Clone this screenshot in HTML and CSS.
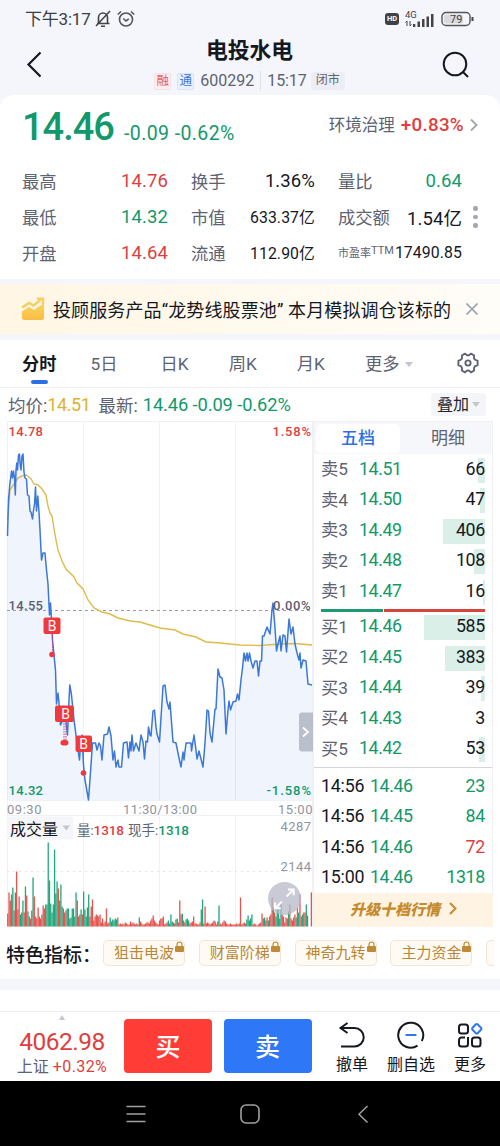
FILE: index.html
```html
<!DOCTYPE html>
<html lang="zh-CN">
	<head>
		<meta charset="utf-8" />
		<title>电投水电 600292</title>
		<link rel="stylesheet" href="styles.css">
	</head>
	<body>
		<div class="status-bar">
			<span class="clock">下午3:17</span>
			<svg class="bell" width="18" height="20" viewBox="0 0 18 20" fill="none" stroke="#444" stroke-width="1.6">
				<path d="M3 14.5h12.5M4.5 14V8.500a4.500 4.500 0 0 1 9 0V14M7 17.200h4M2 17L16 2" />
			</svg>
			<svg class="alarm" width="18" height="18" viewBox="0 0 18 18" fill="none" stroke="#555" stroke-width="1.6">
				<circle cx="9" cy="9.500" r="6.500" />
				<path d="M6.300 8.500L9 11l2.800-2.200M.800 4.500L4 1.500M17.200 4.500L14 1.500" />
			</svg>
			<div class="status-right">
				<span class="hd">HD</span>
				<svg width="30" height="18" viewBox="0 0 30 18" fill="#444">
					<text x="0" y="8" font-size="9.500" font-family="Roboto">4G</text>
					<path d="M2 11v5M.500 12.500L2 11M5 16v-5M5 16l1.500-1.500" stroke="#444" fill="none" />
					<path d="M8 14h2.300v3H8zM12.500 11.500h2.500v5.500h-2.500zM17 9h2.500v8H17zM21.500 6.500H24V17h-2.500zM26 4h2.500v13H26z" />
				</svg>
				<svg width="33" height="16" viewBox="0 0 33 16">
					<rect x="1" y="1.500" width="28" height="13" rx="4" fill="none" stroke="#555" stroke-width="1.400" />
					<rect x="3" y="3.500" width="19" height="9" rx="2" fill="#d9dadd" />
					<path d="M31.500 6v4" stroke="#444" stroke-width="2" />
					<text x="9" y="12" font-size="11" font-family="Roboto" fill="#444">79</text>
				</svg>
			</div>
		</div>

		<header class="header">
			<svg class="back" width="18" height="28" viewBox="0 0 18 28" fill="none" stroke="#15181f" stroke-width="2.200">
				<path d="M14.500 2.500L2.500 14.500L14.500 26.500" />
			</svg>
			<div class="title-box">
				<h1>电投水电</h1>
				<div class="sub-title">
					<span class="tag tag-red">融</span>
					<span class="tag tag-blue">通</span>
					<span class="code">600292</span>
					<span class="time">15:17</span>
					<span class="closed">闭市</span>
				</div>
			</div>
			<svg class="search" width="28" height="28" viewBox="0 0 28 28" fill="none" stroke="#15181f" stroke-width="2">
				<circle cx="13" cy="13" r="11.300" />
				<path d="M20.500 20.500L26 26" />
			</svg>
		</header>

		<section class="quote">
			<div class="quote-top">
				<span class="price">14.46</span>
				<span class="change">-0.09 -0.62%</span>
				<span class="sector">环境治理</span>
				<span class="sector-change">+0.83%</span>
				<svg width="8" height="14" viewBox="0 0 8 14" fill="none" stroke="#a0a5b3" stroke-width="1.800"><path d="M1 1.500L6.500 7L1 12.500" /></svg>
			</div>
			<div class="quote-body">
				<dl>
					<div><dt>最高</dt><dd class="red">14.76</dd></div>
					<div><dt>最低</dt><dd class="green">14.32</dd></div>
					<div><dt>开盘</dt><dd class="red">14.64</dd></div>
				</dl>
				<dl>
					<div><dt>换手</dt><dd>1.36%</dd></div>
					<div><dt>市值</dt><dd class="small">633.37亿</dd></div>
					<div><dt>流通</dt><dd class="small">112.90亿</dd></div>
				</dl>
				<dl>
					<div><dt>量比</dt><dd class="green">0.64</dd></div>
					<div><dt>成交额</dt><dd>1.54亿</dd></div>
					<div><dt class="tiny">市盈率<sup>TTM</sup></dt><dd class="small">17490.85</dd></div>
				</dl>
				<div class="dots"><i></i><i></i><i></i></div>
			</div>
		</section>

		<div class="banner">
			<svg width="24" height="24" viewBox="0 0 24 24">
				<defs>
					<linearGradient id="gold" x1="0" y1="0" x2="0" y2="1">
						<stop offset="0" stop-color="#fbd45c" />
						<stop offset="1" stop-color="#f9bd45" />
					</linearGradient>
				</defs>
				<path d="M1 14.500l7-4.500 5 3L23 6v15a2 2 0 0 1-2 2H3a2 2 0 0 1-2-2z" fill="url(#gold)" />
				<path d="M1 10.500l7-4.500 4.500 2.500 7-5.500M16 1.800h6v5" fill="none" stroke="#f8cd62" stroke-width="2.400" />
			</svg>
			<p>投顾服务产品“龙势线股票池” 本月模拟调仓该标的</p>
			<svg width="12" height="12" viewBox="0 0 12 12" stroke="#a0a5b3" stroke-width="1.700"><path d="M.500 .500l11 11M11.500 .500l-11 11" /></svg>
		</div>

		<nav class="tabs">
			<span class="tab active">分时</span>
			<span class="tab five">5日</span>
			<span class="tab">日K</span>
			<span class="tab">周K</span>
			<span class="tab">月K</span>
			<span class="tab more">更多<i class="arrow"></i></span>
			<svg class="gear" width="24" height="24" viewBox="0 0 24 24" fill="none" stroke="#5d6373" stroke-width="1.900" stroke-linejoin="round">
				<path d="M9 2.700Q12 6.300 15 2.700L18.200 4.500Q16.800 9 21.600 9.700V14.300Q16.800 15 18.200 19.500L15 21.300Q12 17.700 9 21.300L5.800 19.500Q7.200 15 2.400 14.300V9.700Q7.200 9 5.800 4.500Z" />
				<circle cx="12" cy="12" r="2.600" />
			</svg>
		</nav>

		<div class="info-row">
			<span>均价:</span><span class="yellow">14.51</span>
			<span class="latest">最新:</span>
			<span class="green values">14.46 -0.09 -0.62%</span>
			<span class="overlay-btn">叠加<i class="arrow"></i></span>
		</div>

		<main class="market">
			<svg class="chart" width="313" height="506" viewBox="0 421 313 506">
				<path class="grid" d="M7.500 421.500H312.500V926.500M7.500 421.500V926.500M83.500 421V800M83.500 816V926M159.500 421V800M159.500 816V926M235.500 421V800M235.500 816V926M7 815.500H312" />
				<path id="price-area" class="price-area" />
				<path class="mid" d="M7 610.500H312" />
				<path class="grid" d="M7 800.500H312" />
				<path class="avg-line" d="M7.500 520L9 502L10 490L14 484L18 478L22 476L26 475L29 477L31 479L34 484L38 485L42 489L46 495L48 506L50 513L52 516L55 535L58 550L62 561L66 569L74 577L77 583L83 589L88 600L94 608L102 612L110 614L118 618L130 621L140 622L150 625L160 628L175 630L183 634L196 637L206 642L220 643L240 645L260 645.500L280 644L295 643.500L312 645" />
				<path id="price-line" class="price-line" />
				<g class="axis">
					<text x="8.500" y="436" textLength="34.500" class="f-red">14.78</text>
					<text x="8.500" y="609.500" textLength="34.500" class="f-dark">14.55</text>
					<text x="8.500" y="795" textLength="34.500" class="f-green">14.32</text>
					<text x="272.500" y="436" textLength="38.500" class="f-red">1.58%</text>
					<text x="273" y="609.500" textLength="37.500" class="f-dark">0.00%</text>
					<text x="266.500" y="795" textLength="44.500" class="f-green">-1.58%</text>
				</g>
				<g class="axis f-gray">
					<text x="7" y="813.500" textLength="34.500">09:30</text>
					<text x="123" y="813.500" textLength="74">11:30/13:00</text>
					<text x="278" y="813.500" textLength="34.500">15:00</text>
					<text x="280.500" y="831" textLength="30.500">4287</text>
					<text x="280.500" y="870.500" textLength="30.500">2144</text>
				</g>
				<g class="buys">
					<path d="M52.500 634V653M64 721V742M66 721V742M83.500 752V771" />
					<circle cx="52" cy="654.500" r="2.800" />
					<rect x="60.500" y="740" width="8" height="5.500" rx="2.700" />
					<circle cx="83.500" cy="773" r="2.800" />
					<rect x="43.500" y="617.500" width="17" height="16.500" rx="2" />
					<rect x="55" y="705.500" width="19" height="16.500" rx="2" />
					<rect x="75.500" y="735.500" width="16.500" height="16.500" rx="2" />
					<text x="52" y="631">B</text>
					<text x="65.500" y="718.500">B</text>
					<text x="83.700" y="748.800">B</text>
				</g>
				<path d="M302 712.500H313V751.500H302a3 3 0 0 1-3-3V715.500a3 3 0 0 1 3-3z" fill="#b9c0cc" />
				<path d="M303 727.500L308 732L303 736.500" fill="none" stroke="#fff" stroke-width="1.800" />
				<path d="M7 871.500H312" stroke="#e1e3e8" stroke-dasharray="2 4" />
				<rect x="7" y="816.500" width="66" height="23" fill="#f5f6f9" />
				<text x="10" y="834.500" class="vol-title">成交量</text>
				<path d="M62.500 825.500h7.500l-3.700 5z" fill="#c3c6cf" />
				<text x="77" y="834.500" class="vol-text" textLength="47"><tspan>量:</tspan><tspan class="f-red num">1318</tspan></text>
				<text x="128" y="834.500" class="vol-text" textLength="61"><tspan>现手:</tspan><tspan class="f-green num">1318</tspan></text>
				<g id="volume"></g>
				<circle cx="284.500" cy="898.500" r="16.500" fill="#b5b9c7" fill-opacity=".75" />
				<path d="M286.500 896.500L293 890M288 889.500h5.700v5.700M282 901.500L275.500 908M275 902.500v5.700h5.700" fill="none" stroke="#fff" stroke-width="2" />
			</svg>

			<aside class="panel">
				<div class="panel-tabs">
					<span class="selected">五档</span>
					<span>明细</span>
				</div>
				<ul class="orders" id="sell"></ul>
				<div class="ratio"><i class="ratio-green"></i><i class="ratio-red"></i></div>
				<ul class="orders" id="buy"></ul>
				<ul class="trades">
					<li><span>14:56</span><b>14.46</b><em>23</em></li>
					<li><span>14:56</span><b>14.45</b><em>84</em></li>
					<li><span>14:56</span><b>14.46</b><em class="red">72</em></li>
					<li><span>15:00</span><b>14.46</b><em>1318</em></li>
				</ul>
				<div class="upgrade">
					<span>升级十档行情</span>
					<svg width="8" height="13" viewBox="0 0 8 13" fill="none" stroke="#c48a2c" stroke-width="2"><path d="M1 1L6.500 6.500L1 12" /></svg>
				</div>
			</aside>
		</main>

		<section class="special">
			<strong>特色指标：</strong>
			<span class="chip">狙击电波<svg width="9" height="12" viewBox="0 0 9 12"><path d="M2 6V3.500a2.500 2.500 0 0 1 5 0V6" fill="none" stroke="#c08a35" stroke-width="1.200" /><rect y="5" width="9" height="6" rx="1" fill="#c08a35" /></svg></span>
			<span class="chip">财富阶梯<svg width="9" height="12" viewBox="0 0 9 12"><path d="M2 6V3.500a2.500 2.500 0 0 1 5 0V6" fill="none" stroke="#c08a35" stroke-width="1.200" /><rect y="5" width="9" height="6" rx="1" fill="#c08a35" /></svg></span>
			<span class="chip">神奇九转<svg width="9" height="12" viewBox="0 0 9 12"><path d="M2 6V3.500a2.500 2.500 0 0 1 5 0V6" fill="none" stroke="#c08a35" stroke-width="1.200" /><rect y="5" width="9" height="6" rx="1" fill="#c08a35" /></svg></span>
			<span class="chip">主力资金<svg width="9" height="12" viewBox="0 0 9 12"><path d="M2 6V3.500a2.500 2.500 0 0 1 5 0V6" fill="none" stroke="#c08a35" stroke-width="1.200" /><rect y="5" width="9" height="6" rx="1" fill="#c08a35" /></svg></span>
			<span class="chip"></span>
		</section>
		<div class="next-section"></div>

		<footer class="trade-bar">
			<div class="index">
				<i class="up"></i>
				<span class="index-value">4062.98</span>
				<span class="index-name">上证 <b>+0.32%</b></span>
			</div>
			<button class="btn btn-buy">买</button>
			<button class="btn btn-sell">卖</button>
			<div class="action">
				<svg width="28" height="28" viewBox="0 0 28 28" fill="none" stroke="#15181f" stroke-width="2">
					<path d="M9.500 2L2.500 7L9.500 12M3 7H16.500a9 9 0 0 1 0 18.500H3" />
				</svg>
				<span>撤单</span>
			</div>
			<div class="action wide">
				<svg width="28" height="28" viewBox="0 0 28 28" fill="none" stroke="#15181f" stroke-width="2">
					<path d="M20.500 24.700A12.500 12.500 0 1 1 24.800 20" />
					<path d="M8.500 14H19.500" stroke="#2e77f6" />
				</svg>
				<span>删自选</span>
			</div>
			<div class="action">
				<svg width="28" height="28" viewBox="0 0 28 28" fill="none" stroke="#15181f" stroke-width="2">
					<rect x="3" y="3.500" width="9" height="9" rx="2.500" />
					<path d="M12 16V23a2.500 2.500 0 0 1-2.500 2.500H5.500A2.500 2.500 0 0 1 3 23V19A2.500 2.500 0 0 1 5.500 16.500H9M24.500 20V23a2.500 2.500 0 0 1-2.500 2.500H18.500A2.500 2.500 0 0 1 16 23V19A2.500 2.500 0 0 1 18.500 16.500H22A2.500 2.500 0 0 1 24.500 19V21" />
					<rect x="17" y="4" width="7.500" height="7.500" rx="1.500" transform="rotate(45 20.750 7.750)" stroke="#2e77f6" />
				</svg>
				<span>更多</span>
			</div>
		</footer>

		<div class="system-nav">
			<svg width="20" height="20" viewBox="0 0 20 20" stroke="#a0a0a0" stroke-width="1.500"><path d="M.500 2.500H19.500M.500 10H19.500M.500 17.500H19.500" /></svg>
			<svg width="20" height="20" viewBox="0 0 20 20" fill="none" stroke="#a0a0a0" stroke-width="1.600"><rect x="1" y="1" width="18" height="18" rx="5" /></svg>
			<svg width="20" height="20" viewBox="0 0 20 20" fill="none" stroke="#a0a0a0" stroke-width="1.500"><path d="M13.500 2L5 10.200L13.500 18.500" /></svg>
		</div>

		<script>
			// Intraday price, x y pairs
			const price = '7.5,536 8.5,500 9.5,488 10,483 11.5,471 12.5,478 13.5,471 14.5,478 15.3,495 16,470 16.8,463 17.5,470 18.5,455 19.5,454 20,463 21,470 22,456 23,454 24,472 25,478 26.5,479 27.5,495 29,496 30,511 31,512 32.5,519 33.5,510 34.5,504 35.5,487 36.5,511 37.8,496 39,512 40,530 41.5,560 43,553 45,553 46.5,570 48,584 49.5,615 50.5,603 51.5,620 52.5,640 54,655 55.5,670 56.5,704 58,693 59,703 60.5,725 62,722 64,712 66,722 67.5,735 69,700 69.8,685 71.5,695 74,720 76,735 78,750 79.5,760 80.5,745 82,735 83.5,765 85,780 88.5,800 91,765 92.5,743 95.5,743 97,750 99,743 100.5,746 102,760 104,735 107.5,734 109,727 111,736 113,760 114.5,751 116,767 118,760 119,767 121.5,767 123.5,743 127,742 128.5,758 130,742 131,751 132,735 133.5,751 136,743 139,751 141,735 143,742 144.5,759 146,741 147.5,742 148.5,727 150,735 151,736 153,711 154.5,710 156,727 157,734 159.5,742 163,686 165,685 167,702 169,709 170,702 173,742 176,743 179,758 181,767 183,752 184,760 186,743 191,743 191.5,751 194,735 196,750 197,759 199,751 203,767 205,743 207,710 208.5,711 210,733 212,742 215,709 216,709 218,669 220,677 222,678 224,690 226,734 228,710 229,701 230.5,710 233,702 236,701 237.5,694 239,700 241,680 242.5,668 244,653 245.5,661 247,653 248,661 249.5,653 251,661 253,668 255,661 257,661 258.5,676 260,661 261.5,661 262.5,636 264,636 267,627 270,634 272,610 273,603 275,628 276.5,651 278,644 280,636 281,651 283,635 285,636 286.5,652 289,619 291,634 293,627 295,644 297,653 299,660 300,653 301,668 303,660 306,661 308,684 312,685';
			// Volume per minute, negative is a falling minute
			const volume = [
				13,34,26,32,-39,16,-34,55,17,30,-12,14,-26,14,-40,31,-15,-10,8,16,-49,30,10,8,19,10,8,-12,21,18,
				-22,-22,-84,-46,-23,-14,-22,-77,-33,-45,38,26,-42,-20,18,14,16,-18,-18,8,-9,-18,-18,-10,-34,26,10,-12,-17,12,
				-35,-17,-10,-19,-32,10,20,27,6,10,12,11,10,12,4,8,3,5,18,3,4,-9,-5,-7,-6,-8,-7,9,2,3,
				2,3,2,4,3,2,2,5,3,4,3,-2,3,2,-9,5,3,2,2,3,4,4,3,6,8,11,6,4,3,2,
				6,8,8,10,2,3,4,-6,3,-12,-5,-4,3,-7,-8,4,26,12,-13,6,4,-7,-8,-6,3,4,5,10,3,3,
				2,2,4,-17,-27,3,20,3,4,3,2,3,4,6,5,2,-5,-21,3,2,4,6,5,3,2,2,3,2,2,2,
				2,3,-2,3,29,2,3,4,3,-7,-11,-6,-8,-12,2,3,2,1,2,3,4,13,8,-9,6,9,-6,10,12,29,
				-19,14,-10,-20,-18,8,-24,12,10,4,9,8,-15,22,8,6,9,12,-9,19,-14,32,10,-12,14,14,-22,-11,0,0,34
			];
			const sell = [[5, '14.51', 66], [4, '14.50', 47], [3, '14.49', 406], [2, '14.48', 108], [1, '14.47', 16]];
			const buy = [[1, '14.46', 585], [2, '14.45', 383], [3, '14.44', 39], [4, '14.43', 3], [5, '14.42', 53]];

			document.getElementById('price-line').setAttribute('d', 'M' + price);
			document.getElementById('price-area').setAttribute('d', 'M' + price + ' V800 H7.5Z');

			document.getElementById('volume').innerHTML = volume.map((v, i) => {
				const h = Math.abs(v);
				return `<rect x="${(7.1 + i * 1.265).toFixed(2)}" y="${926.5 - h}" width="1.3" height="${h}" fill="${v < 0 ? '#22a77c' : '#e5544f'}" />`;
			}).join('');

			const renderOrders = (id, name, rows) => {
				document.getElementById(id).innerHTML = rows.map(([level, value, amount]) => `
					<li>
						<span>${name}${level}</span><b>${value}</b>
						<em><i style="width: ${Math.round(amount / 585 * 61)}px"></i>${amount}</em>
					</li>`).join('');
			};
			renderOrders('sell', '卖', sell);
			renderOrders('buy', '买', buy);
		</script>
	</body>
</html>
```

FILE: styles.css
```css
* {
	padding: 0;
	margin: 0;
	box-sizing: border-box;
}

body {
	width: 500px;
	height: 1146px;
	overflow: hidden;
	display: flex;
	flex-direction: column;
	background: #f4f6fb;
	font-family: Roboto, "Noto Sans CJK SC", sans-serif;
	font-size: 17px;
	color: #15181f;
}

body > * {
	flex-shrink: 0;
}

svg {
	display: block;
	flex-shrink: 0;
}

i, em {
	font-style: normal;
}

ul {
	list-style: none;
}

.red {
	color: #e03e3e;
}

.green {
	color: #12996b;
}

.yellow {
	color: #e0b22f;
}

.arrow {
	display: inline-block;
	border: 4px solid transparent;
	border-top: 5px solid #c3c6cf;
	border-bottom: 0;
}

/* status bar */
.status-bar {
	display: flex;
	align-items: center;
	height: 37px;
	padding: 0 26px 0 25px;
	color: #3b3d42;
}

.clock {
	width: 69px;
	padding-bottom: 2px;
	font-size: 17px;
	letter-spacing: -0.2px;
	white-space: nowrap;
}

.alarm {
	margin-left: 5px;
}

.status-right {
	display: flex;
	align-items: center;
	gap: 6px;
	margin-left: auto;
}

.hd {
	width: 14px;
	height: 12px;
	border-radius: 3px;
	background: #3f4145;
	color: #fff;
	font-size: 7.500px;
	font-weight: 700;
	line-height: 12px;
	text-align: center;
}

/* header */
.header {
	display: flex;
	justify-content: space-between;
	height: 58px;
	padding: 0 30px 0 26px;
}

.back {
	margin-top: 13px;
}

.search {
	margin-top: 14px;
}

.title-box {
	display: flex;
	flex-direction: column;
	align-items: center;
	padding-left: 13px;
}

h1 {
	height: 33px;
	font-size: 21.800px;
	line-height: 28px;
}

.sub-title {
	display: flex;
	align-items: center;
	height: 22px;
	font-size: 16px;
	color: #5d6373;
}

.tag {
	width: 17px;
	height: 17px;
	margin-right: 6px;
	border: 1px solid;
	border-radius: 2px;
	font-size: 12.500px;
	line-height: 14px;
	text-align: center;
}

.tag-red {
	background: #fdf0f1;
	border-color: #fae0e1;
	color: #e35a57;
}

.tag-blue {
	background: #eaf1fe;
	border-color: #d6e4fc;
	color: #3d78e3;
}

.code {
	padding-right: 6px;
	border-right: 1px solid #dfe2e9;
	line-height: 20px;
}

.time {
	padding: 0 4px 0 6px;
	line-height: 20px;
	letter-spacing: -0.1px;
}

.closed {
	padding: 0 5px;
	height: 18px;
	background: #eceef4;
	border-radius: 3px;
	font-size: 12px;
	line-height: 17px;
}

/* quote */
.quote {
	height: 184px;
	background: #fff;
	border-radius: 14px 14px 0 0;
}

.quote-top {
	display: flex;
	align-items: center;
	height: 68px;
	padding: 0 22px;
}

.price {
	width: 102px;
	padding-bottom: 4px;
	font-size: 38px;
	font-weight: 500;
	letter-spacing: -1px;
	color: #12996b;
}

.change {
	padding-top: 8px;
	font-size: 19.500px;
	letter-spacing: 0.400px;
	color: #12996b;
}

.sector {
	margin-left: auto;
	padding-bottom: 10px;
	font-size: 16.500px;
	color: #5d6373;
}

.sector-change {
	margin: 0 6px;
	padding-bottom: 9px;
	font-size: 18.800px;
	font-weight: 500;
	letter-spacing: 0.300px;
	color: #e03e3e;
}

.quote-top svg {
	margin-bottom: 9px;
}

.quote-body {
	display: flex;
	padding: 0 22px;
}

dl {
	width: 124px;
	margin-right: 23px;
}

dl:first-child {
	width: 146px;
}

dl:nth-child(3) {
	margin-right: 11px;
}

dl div {
	display: flex;
	justify-content: space-between;
	align-items: center;
	height: 36px;
}

dt {
	padding-bottom: 2px;
	font-size: 17.300px;
	color: #5d6373;
	white-space: nowrap;
}

dt.tiny {
	font-size: 11px;
}

dt sup {
	font-size: 11px;
	line-height: 0;
	vertical-align: 3px;
}

dd {
	font-size: 18.500px;
	letter-spacing: 0.1px;
	white-space: nowrap;
}

dd.small {
	padding-bottom: 1px;
	font-size: 15.800px;
	letter-spacing: 0.1px;
}

.dots {
	display: flex;
	flex-direction: column;
	gap: 4px;
	padding-top: 43px;
}

.dots i {
	width: 4.500px;
	height: 4.500px;
	border-radius: 50%;
	background: #a3a6ae;
}

/* banner */
.banner {
	display: flex;
	align-items: center;
	height: 50px;
	margin: 5px 0 6px;
	padding: 0 22px 0 21px;
	background: linear-gradient(90deg, #fff6e4, #fffdf8);
}

.banner p {
	margin: 0 auto 0 8px;
	padding-bottom: 1px;
	font-size: 18px;
	letter-spacing: 0.120px;
	white-space: nowrap;
}

/* tabs */
.tabs {
	display: flex;
	height: 48px;
	padding: 0 20px 0 22px;
	background: #fff;
	border-bottom: 1px solid #eff0f4;
}

.tab {
	margin-right: 40px;
	font-size: 17.300px;
	line-height: 49px;
	color: #5d6373;
	white-space: nowrap;
}

.tab.active {
	display: flex;
	flex-direction: column;
	align-items: center;
	margin-right: 34px;
	color: #15181f;
	font-weight: 700;
}

.tab.active::after {
	content: "";
	width: 17px;
	height: 4px;
	margin-top: -9px;
	border-radius: 2px;
	background: #2e6fe6;
}

.tab.five {
	margin-right: 43px;
}

.tab .arrow {
	margin-left: 5px;
	vertical-align: 3px;
}

.tab.more {
	margin-right: auto;
}

.gear {
	margin-top: 11px;
}

/* line above the chart */
.info-row {
	display: flex;
	align-items: center;
	height: 33px;
	padding: 0 14px 0 8px;
	background: #fff;
	font-size: 17.500px;
	color: #5d6373;
	white-space: nowrap;
}

.latest {
	margin: 0 5px 0 8px;
}

.info-row .yellow, .info-row .values {
	font-size: 18px;
	letter-spacing: -0.400px;
}

.info-row .values {
	font-size: 18.300px;
	letter-spacing: -0.1px;
}

.overlay-btn {
	margin-left: auto;
	padding: 0 6px;
	height: 23px;
	background: #f4f5f8;
	border-radius: 3px;
	font-size: 16px;
	line-height: 23px;
	color: #22252c;
}

.overlay-btn .arrow {
	margin-left: 3px;
	vertical-align: 3px;
}

/* chart */
.market {
	display: flex;
	height: 506px;
	background: #fff;
}

.grid {
	fill: none;
	stroke: #f0f1f4;
}

.price-area {
	fill: #2e6fe6;
	fill-opacity: 0.080;
}

.price-line {
	fill: none;
	stroke: #3b78d8;
	stroke-width: 1.500;
	stroke-linejoin: round;
}

.avg-line {
	fill: none;
	stroke: #dfbb4a;
	stroke-width: 1.400;
}

.mid {
	stroke: #979ba5;
	stroke-dasharray: 3 3;
}

.axis {
	font-size: 13px;
	font-weight: 500;
}

.f-red {
	fill: #e03e3e;
}

.f-green {
	fill: #12996b;
}

.f-dark {
	fill: #5b6070;
}

.axis.f-gray {
	fill: #9094a1;
	font-weight: 400;
}

.buys {
	fill: #ee3a3d;
}

.buys path {
	stroke: #c0418c;
	stroke-dasharray: 1.500 1;
}

.buys text {
	fill: #fff;
	font-size: 14px;
	text-anchor: middle;
}

.vol-title {
	font-size: 16px;
	fill: #15181f;
}

.vol-text {
	font-size: 13.500px;
	fill: #5d6373;
}

.num {
	font-weight: 500;
}

/* order book */
.panel {
	width: 180px;
	border: 1px solid #eff0f4;
	border-width: 1px 1px 0;
}

.panel-tabs {
	display: flex;
	height: 32px;
	padding: 2px;
	background: #f6f7fa;
}

.panel-tabs span {
	flex: 1;
	height: 29px;
	border-radius: 5px;
	font-size: 17px;
	line-height: 29px;
	text-align: center;
	color: #5d6373;
	padding-left: 6px;
}

.panel-tabs .selected {
	background: #fff;
	color: #2e6fe6;
	font-weight: 500;
	padding-left: 0;
}

.orders li, .trades li {
	display: flex;
	align-items: center;
	height: 30.500px;
	padding: 0 7px 2px;
	font-size: 17.800px;
}

.orders span {
	width: 38px;
	padding-bottom: 1px;
	font-size: 17.300px;
	color: #5d6373;
}

.orders b, .trades b {
	font-weight: 400;
	letter-spacing: -0.400px;
	color: #12996b;
}

.orders em {
	position: relative;
	margin-left: auto;
	letter-spacing: -0.300px;
}

.orders em i {
	position: absolute;
	z-index: -1;
	right: 0;
	top: 0;
	height: 25px;
	background: #d9efe8;
}

.orders em, .panel {
	z-index: 0;
}

.ratio {
	display: flex;
	gap: 1px;
	height: 3px;
	margin: 2px 7px 0;
}

.ratio-green {
	width: 62px;
	background: #1d9a70;
}

.ratio-red {
	flex: 1;
	background: #d4453f;
}

.trades {
	margin-top: 3px;
	padding-top: 3px;
	border-top: 1px solid #d3d5db;
}

.trades span {
	width: 49px;
	letter-spacing: -0.200px;
}

.trades em {
	margin-left: auto;
	letter-spacing: -0.300px;
	color: #12996b;
}

.trades em.red {
	color: #e03e3e;
}

.upgrade {
	display: flex;
	justify-content: center;
	align-items: center;
	gap: 9px;
	height: 34px;
	margin-right: -1px;
	padding-bottom: 3px;
	background: #fff3e3;
	font-size: 15px;
	font-weight: 900;
	font-style: italic;
	color: #c48a2c;
}

/* indicators */
.special {
	display: flex;
	align-items: center;
	width: 500px;
	height: 52px;
	padding-left: 6px;
	border-right: 6px solid #fff;
	background: #fff;
	overflow: hidden;
}

.special strong {
	width: 97px;
	font-size: 19px;
	font-weight: 500;
	white-space: nowrap;
	flex-shrink: 0;
}

.chip {
	display: flex;
	flex-shrink: 0;
	width: 82px;
	height: 26px;
	margin-right: 13.800px;
	padding-left: 10px;
	border: 1px solid #f0e6d3;
	border-radius: 5px;
	background: #fffbf4;
	font-size: 15px;
	line-height: 24px;
	color: #b98635;
	white-space: nowrap;
}

.chip svg {
	margin: 0 0 0 1px;
}

.next-section {
	height: 33px;
	border-top: 11px solid #f4f6fb;
	border-bottom: 1px solid #ececf0;
	background: #fff;
}

/* bottom bar */
.trade-bar {
	display: flex;
	height: 69px;
	background: #fff;
}

.index {
	display: flex;
	flex-direction: column;
	align-items: center;
	width: 124px;
	color: #e03e3e;
}

.up {
	margin-top: 3px;
	border: 3.500px solid transparent;
	border-top: 0;
	border-bottom: 5px solid #c3c6cf;
}

.index-value {
	font-size: 24.500px;
	line-height: 34px;
	margin-top: 5px;
	letter-spacing: -0.500px;
}

.index-name {
	font-size: 16px;
	line-height: 16px;
	color: #5d6373;
	white-space: nowrap;
}

.index-name b {
	font-weight: 400;
	letter-spacing: 0.400px;
	color: #e03e3e;
}

.btn {
	width: 88px;
	height: 54px;
	margin: 7px 11.500px 0 0;
	padding-bottom: 2px;
	border: none;
	border-radius: 4px;
	color: #fff;
	font-family: inherit;
	font-size: 25px;
	font-weight: 500;
}

.btn-buy {
	background: #ff3d36;
}

.btn-sell {
	background: #2e77f6;
}

.action {
	display: flex;
	flex-direction: column;
	align-items: center;
	width: 58px;
	padding-top: 9px;
	font-size: 16px;
	white-space: nowrap;
}

.action span {
	margin-top: 4px;
	line-height: 24px;
}

.action.wide {
	width: 60px;
}

/* android navigation */
.system-nav {
	display: flex;
	justify-content: center;
	align-items: center;
	gap: 94px;
	height: 66px;
	background: #000;
}
```
